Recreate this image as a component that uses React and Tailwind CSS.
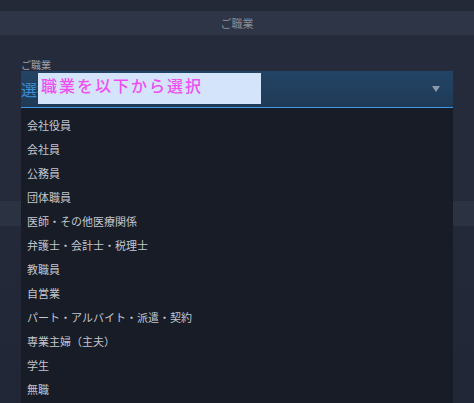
import { useState } from "react";

const jobs = [
  "会社役員",
  "会社員",
  "公務員",
  "団体職員",
  "医師・その他医療関係",
  "弁護士・会計士・税理士",
  "教職員",
  "自営業",
  "パート・アルバイト・派遣・契約",
  "専業主婦（主夫）",
  "学生",
  "無職",
];

const App = () => {
  const [open] = useState(true);

  return (
    <div
      className="w-full h-[403px] bg-[#252b3a] overflow-hidden"
      style={{ fontFamily: '"Noto Sans CJK JP", "Noto Sans", sans-serif' }}
    >
      <div className="h-[11px] bg-[#232937]" />
      <div className="h-[24px] bg-[#2e3546] flex items-center justify-center text-[11px] text-[#878d98]">
        ご職業
      </div>

      <div className="px-[21px] pt-[23px]">
        <div className="text-[10px] leading-[13px] text-[#9da2ab]">ご職業</div>

        <div className="relative">
          {/* select */}
          <div className="h-[37px] bg-gradient-to-b from-[#234466] to-[#1f3a56] border-b border-[#3f9ae6] flex items-center justify-between">
            <span className="text-[16px] text-[#3b8fd6] whitespace-nowrap">選択</span>
            <svg width="8" height="6" viewBox="0 0 8 6" className="mr-[13px]">
              <path d="M0 0 H8 L4 6 Z" fill="#8d9aab" />
            </svg>
          </div>

          {/* overlay hint */}
          <div className="absolute left-[17px] top-[2px] w-[223px] h-[31px] bg-[#d4e5fb] pl-[3px] pt-[3px]">
            <span className="block text-[16px] leading-[18px] font-medium text-[#ef4ff0] tracking-[2px] whitespace-nowrap">
              職業を以下から選択
            </span>
          </div>

          {/* dropdown list */}
          {open && (
            <ul className="absolute left-0 right-0 top-[37px] h-[300px] bg-[#171c27] pt-[5px] z-10">
              {jobs.map((job, i) => (
                <li
                  key={i}
                  className="h-[24px] flex items-center px-[6px] text-[11px] text-[#c3c6cd] whitespace-nowrap"
                >
                  {job}
                </li>
              ))}
            </ul>
          )}
        </div>
      </div>

      {/* section behind the dropdown */}
      <div className="mt-[93px] h-[25px] bg-[#2b3242]" />
      <div className="h-[200px] bg-gradient-to-b from-[#232938] to-[#202636]" />
    </div>
  );
};

export default App;
